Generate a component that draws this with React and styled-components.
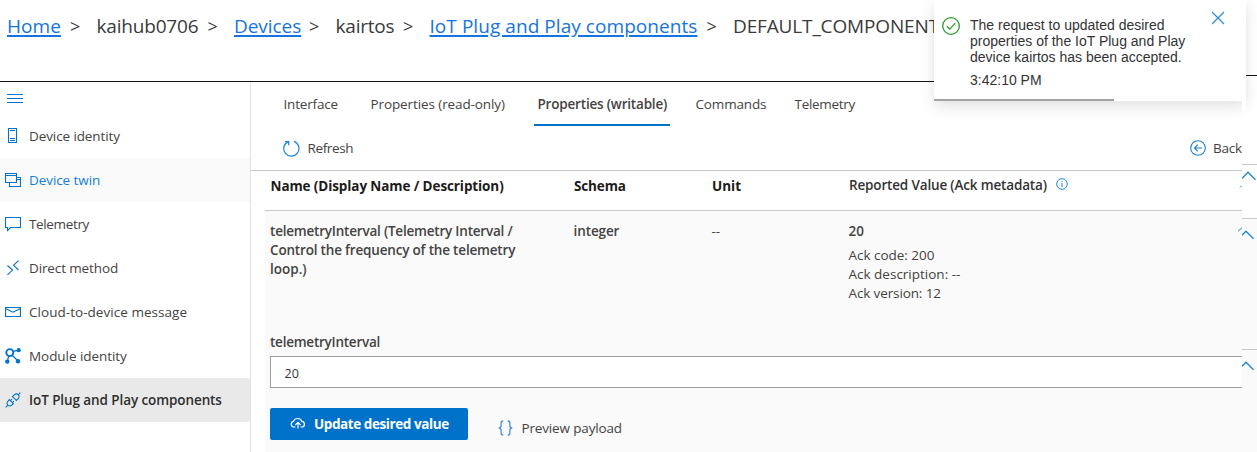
import React from "react";
import styled, { createGlobalStyle, css } from "styled-components";

const blue = "#0072c9";
const rule = "#c8c8c8";

const GlobalStyle = createGlobalStyle`
  *, *::before, *::after { box-sizing: border-box; }
  body {
    margin: 0;
    overflow: hidden;
    background: #fff;
    color: #444342;
    font: 13.5px/19px "Open Sans", "Noto Sans", sans-serif;
  }
`;

const Page = styled.div`
  position: relative;
  display: flex;
  flex-direction: column;
  width: 1257px;
  height: 452px;
  overflow: hidden;
`;

const Text = styled.span`
  white-space: nowrap;
  letter-spacing: ${(p) => p.$ls || 0}px;
`;

const Header = styled.header`
  display: flex;
  align-items: flex-start;
  height: 82px;
  flex: none;
`;
const Breadcrumbs = styled.nav`
  display: flex;
  flex: none;
  width: 1246px;
  height: 82px;
  padding: 9px 0 0 7px;
  border-bottom: 1px solid #111;
  font-size: 19px;
  line-height: 34px;
  color: #3a3a3a;
`;
const HeaderEdge = styled.div`
  flex: 1;
  height: 76px;
  border-bottom: 1px solid #111;
`;
const Crumb = styled.span`
  flex: none;
  width: ${(p) => p.$w}px;
  white-space: nowrap;
  letter-spacing: ${(p) => p.$ls || 0}px;
  ${(p) =>
    p.$link &&
    css`
      color: #1574e0;
      text-decoration: underline;
      text-decoration-thickness: 2px;
      text-underline-offset: 2px;
    `}
`;
const Separator = styled.span`
  flex: none;
  width: 35.5px;
  padding-left: 9px;
  font-size: 18px;
`;

const Body = styled.div`
  display: flex;
  flex: 1;
  min-height: 0;
`;

const Sidebar = styled.nav`
  flex: none;
  width: 251px;
  border-right: 1px solid #e1e1e1;
`;
const MenuToggle = styled.div`
  height: 32px;
  padding: 8px 0 0 7px;
  svg { display: block; }
`;
const NavItem = styled.div`
  display: flex;
  align-items: center;
  height: 44px;
  padding-left: 5px;
  gap: 8px;
  svg { flex: none; }
  ${(p) => p.$hover && css`background: #fafafa; color: #1380d6;`}
  ${(p) => p.$selected && css`background: #e9e9e9; color: #2f2e2d; font-weight: 600; border-radius: 0 2px 2px 0;`}
`;

const Main = styled.main`
  flex: 1;
  min-width: 0;
  overflow: hidden;
`;
const Tabs = styled.div`
  display: flex;
  height: 44px;
  padding-left: 29px;
`;
const Tab = styled.div`
  flex: none;
  width: ${(p) => p.$w}px;
  margin-right: ${(p) => p.$gap ?? 25}px;
  padding: 0 3.5px;
  line-height: 44px;
  border-bottom: 2px solid transparent;
  ${(p) => p.$active && css`border-color: ${blue}; font-weight: 600;`}
`;
const CommandBar = styled.div`
  display: flex;
  justify-content: space-between;
  height: 45px;
  padding: 0 0 0 32px;
  border-bottom: 1px solid ${rule};
`;
const Command = styled.div`
  display: flex;
  align-items: center;
  gap: 7.5px;
`;
const Panel = styled.div`
  margin-left: 14px;
`;
const columns = "303.500px 138px 137px 1fr";
const HeadRow = styled.div`
  display: grid;
  grid-template-columns: ${columns};
  height: 40px;
  padding: 6px 0 0 5.5px;
  border-bottom: 1px solid ${rule};
  color: #1c1b1a;
  font-weight: 700;
  overflow: hidden;
`;
const ReportedHead = styled.div`
  display: flex;
  justify-content: space-between;
  margin-top: -1px;
  font-weight: 600;
  color: #333;
`;
const WithInfo = styled.span`
  display: flex;
  align-items: flex-start;
  gap: 9.5px;
  svg { margin-top: 2px; }
`;
const Section = styled.div`
  height: 241px;
  background: #fafafa;
`;
const ValueRow = styled.div`
  display: grid;
  grid-template-columns: ${columns};
  height: 121px;
  padding: 11px 0 0 5px;
`;
const Stack = styled.div`
  display: flex;
  flex-direction: column;
  font-weight: ${(p) => (p.$strong ? 600 : 400)};
`;
const Reported = styled.div`
  display: flex;
  justify-content: space-between;
`;
const ReportedValue = styled.span`
  font-weight: 600;
  margin-bottom: 5px;
`;
const Remnant = styled.svg`
  display: block;
  flex: none;
  width: 4px;
  height: 5px;
  margin-top: ${(p) => p.$top}px;
`;
const Field = styled.label`
  display: block;
  padding-left: 5px;
`;
const FieldLabel = styled.div`
  height: 24px;
  padding: 1px 0 0 0;
  font-weight: 600;
`;
const Input = styled.div`
  height: 32px;
  padding: 0 13.5px;
  line-height: 33px;
  font-size: 12.500px;
  color: #333;
  background: #fff;
  border: 1px solid #a19f9d;
  border-right: 0;
`;
const Actions = styled.div`
  display: flex;
  gap: 29.500px;
  padding: 20px 0 0 5px;
`;
const PrimaryButton = styled.div`
  display: flex;
  align-items: center;
  gap: 8px;
  width: 198px;
  height: 32px;
  padding-left: 20px;
  border-radius: 2px;
  background: ${blue};
  color: #fff;
  font-weight: 700;
`;
const LinkButton = styled.div`
  display: flex;
  align-items: center;
  gap: 8px;
  height: 40px;
`;

const Strip = styled.aside`
  display: flex;
  flex-direction: column;
  flex: none;
  width: 15px;
`;
const StripCell = styled.div`
  flex: ${(p) => (p.$h ? "none" : 1)};
  height: ${(p) => p.$h}px;
  padding-top: ${(p) => p.$pad || 0}px;
  background: ${(p) => (p.$shade ? "#fafafa" : "#fff")};
  border-bottom: ${(p) => (p.$h ? `1px solid ${rule}` : 0)};
  svg { display: block; }
`;

const Toast = styled.div`
  position: absolute;
  left: 934px;
  top: 0;
  display: flex;
  width: 312px;
  height: 101px;
  padding: 17px 0 0 8px;
  background: #fff;
  color: #333;
  font: 14px/16px "Liberation Sans", Arial, sans-serif;
  box-shadow: 0 5px 14px rgba(0, 0, 0, 0.12);
  &::after {
    content: "";
    position: absolute;
    right: 0;
    top: 101px;
    width: 4px;
    height: 10px;
    background: #fff;
  }
`;
const ToastText = styled.div`
  width: 224px;
  margin-left: 10px;
`;
const ToastTime = styled.div`
  margin-top: 7px;
`;
const ToastClose = styled.svg`
  display: block;
  margin: -6px 0 0 16.500px;
`;
const ToastProgress = styled.div`
  position: absolute;
  left: 0;
  bottom: 0;
  width: 180px;
  height: 2px;
  background: #a3a3a3;
`;

const Icon = ({ w = 16, h = 16, sw = 1.1, color = blue, children }) => (
  <svg width={w} height={h} viewBox={`0 0 ${w} ${h}`} fill="none" stroke={color} strokeWidth={sw}>
    {children}
  </svg>
);

const DeviceIcon = () => (
  <Icon>
    <path d="M3.500.5h8v14h-8zM5 2.500h5M5 10.500h5M5 12.500h5" />
  </Icon>
);
const TwinIcon = () => (
  <Icon>
    <path d="M.5 1.5h11v9H.5zM.5 3.5h11M11.5 5.5h4v9h-11v-4M11.5 7.5h4" />
  </Icon>
);
const ChatIcon = () => (
  <Icon>
    <path d="M.5 1.5h15v10H5.5L2.5 14.5v-3h-2z" />
  </Icon>
);
const MethodIcon = () => (
  <Icon>
    <path d="M2.5 5.5l5 4.6-5 4.8M13.5.6l-5 4.7 5 4.7" />
  </Icon>
);
const MailIcon = () => (
  <Icon sw={1.2}>
    <path d="M.5 3.5h15v9H.5zM.5 4.5l7.5 3.7 7.5-3.7" />
  </Icon>
);
const ModuleIcon = () => (
  <Icon>
    <circle cx="4.8" cy="4.6" r="3.5" strokeWidth="1.9" />
    <path d="M8 3.4l5-1M7 7l6 6M3.8 8l-1.4 5" strokeWidth="1.2" />
    <g fill={blue} stroke="none">
      <circle cx="13.7" cy="2.2" r="2.1" />
      <circle cx="13" cy="13.2" r="2.2" />
      <circle cx="2.3" cy="13.6" r="2.2" />
    </g>
  </Icon>
);
const PlugIcon = () => (
  <Icon sw={1.05}>
    <g transform="translate(8 8) rotate(-45)">
      <path d="M-10.500 0h3M-2.300-3.400v6.800M-2.300-2.700h-2.300a2.700 2.700 0 0 0 0 5.400h2.300M-2.300-1.400h2.200M-2.300 1.400h2.200" />
      <path d="M10.500 0h-3M2-3.400v6.800M2-2.700h2.800a2.700 2.700 0 0 1 0 5.400H2" />
    </g>
  </Icon>
);
const RefreshIcon = () => (
  <Icon w={17} h={17} color="#1a86d9" sw={1.2}>
    <path d="M5.200 1.600A7.600 7.600 0 1 0 11 1.400M2 1.500h3.700v3.700" />
  </Icon>
);
const BackIcon = () => (
  <Icon color="#1a7fd0">
    <circle cx="8" cy="8" r="7.300" />
    <path d="M4.500 8h7.500M7.800 4.700L4.500 8l3.300 3.300" />
  </Icon>
);
const InfoIcon = () => (
  <Icon w={12} h={12} color="#1a86d9" sw={1}>
    <circle cx="6" cy="6" r="5.300" />
    <path d="M6 5v4M6 3v1" />
  </Icon>
);
const CloudIcon = () => (
  <Icon color="#fff" sw={1.200}>
    <path d="M5.500 11H3.700a2.900 2.900 0 0 1-.2-5.700C4.300 3.200 6 2.500 7.700 2.500c2 0 3.600 1.100 4 2.900a2.850 2.850 0 0 1 .6 5.600H10.500M8 12.500V6.500M5.300 9L8 6.300 10.700 9" />
  </Icon>
);
const BracesIcon = () => (
  <Icon color="#3a8ad0" sw={1.200}>
    <path d="M5.200.8C3.300.8 3.100 1.600 3.100 3v2.700C3.100 7.200 2.300 8 .7 8c1.600 0 2.400.8 2.400 2.300V13c0 1.400.2 2.200 2.100 2.200M9.800.8c1.900 0 2.100.8 2.100 2.200v2.700c0 1.500.8 2.300 2.400 2.300-1.600 0-2.400.8-2.400 2.300V13c0 1.400-.2 2.200-2.100 2.200" />
  </Icon>
);

const navItems = [
  { label: "Device identity", icon: DeviceIcon, ls: -0.1 },
  { label: "Device twin", icon: TwinIcon, ls: -0.08, hover: true },
  { label: "Telemetry", icon: ChatIcon, ls: -0.36 },
  { label: "Direct method", icon: MethodIcon, ls: -0.12 },
  { label: "Cloud-to-device message", icon: MailIcon, ls: 0.04 },
  { label: "Module identity", icon: ModuleIcon, ls: -0.06 },
  { label: "IoT Plug and Play components", icon: PlugIcon, ls: -0.09, selected: true },
];

export default function App() {
  return (
    <>
      <GlobalStyle />
      <Page>
        <Header>
          <Breadcrumbs>
            <Crumb $link $w={54} $ls={0.05}>Home</Crumb>
            <Separator>&gt;</Separator>
            <Crumb $w={102} $ls={-0.18}>kaihub0706</Crumb>
            <Separator>&gt;</Separator>
            <Crumb $link $w={66} $ls={-0.05}>Devices</Crumb>
            <Separator>&gt;</Separator>
            <Crumb $w={58.5} $ls={-0.2}>kairtos</Crumb>
            <Separator>&gt;</Separator>
            <Crumb $link $w={268} $ls={0.06}>IoT Plug and Play components</Crumb>
            <Separator>&gt;</Separator>
            <Crumb $w={204} $ls={-0.14}>DEFAULT_COMPONENT</Crumb>
          </Breadcrumbs>
          <HeaderEdge />
        </Header>
        <Body>
          <Sidebar>
            <MenuToggle>
              <Icon w={16} h={16}>
                <path d="M0 4.500h16M0 8.500h16M0 12.500h16" />
              </Icon>
            </MenuToggle>
            {navItems.map(({ label, icon: NavIcon, ls, hover, selected }) => (
              <NavItem key={label} $hover={hover} $selected={selected}>
                <NavIcon />
                <Text $ls={ls}>{label}</Text>
              </NavItem>
            ))}
          </Sidebar>
          <Main>
            <Tabs>
              <Tab $w={62}><Text $ls={-0.17}>Interface</Text></Tab>
              <Tab $w={142}><Text $ls={-0.1}>Properties (read-only)</Text></Tab>
              <Tab $w={136} $gap={22} $active><Text $ls={-0.19}>Properties (writable)</Text></Tab>
              <Tab $w={78} $gap={21}><Text $ls={-0.15}>Commands</Text></Tab>
              <Tab $w={68}><Text $ls={-0.3}>Telemetry</Text></Tab>
            </Tabs>
            <CommandBar>
              <Command>
                <RefreshIcon />
                <Text $ls={-0.36}>Refresh</Text>
              </Command>
              <Command>
                <BackIcon />
                <Text $ls={-0.2}>Back</Text>
              </Command>
            </CommandBar>
            <Panel>
              <HeadRow>
                <Text $ls={-0.1}>Name (Display Name / Description)</Text>
                <Text $ls={-0.15}>Schema</Text>
                <Text>Unit</Text>
                <ReportedHead>
                  <WithInfo>
                    <Text $ls={-0.16}>Reported Value (Ack metadata)</Text>
                    <InfoIcon />
                  </WithInfo>
                  <Remnant $top={8} viewBox="0 0 4 5">
                    <path d="M2 3.500L4 1.500" stroke="#1a86d9" />
                  </Remnant>
                </ReportedHead>
              </HeadRow>
              <Section>
                <ValueRow>
                  <Stack $strong>
                    <Text $ls={-0.21}>telemetryInterval (Telemetry Interval /</Text>
                    <Text $ls={-0.18}>Control the frequency of the telemetry</Text>
                    <Text>loop.)</Text>
                  </Stack>
                  <Stack $strong><Text $ls={-0.1}>integer</Text></Stack>
                  <Stack><Text>--</Text></Stack>
                  <Reported>
                    <Stack>
                      <ReportedValue>20</ReportedValue>
                      <Text $ls={-0.03}>Ack code: 200</Text>
                      <Text>Ack description: --</Text>
                      <Text $ls={-0.12}>Ack version: 12</Text>
                    </Stack>
                    <Remnant $top={5} viewBox="0 0 4 5">
                      <path d="M0 4.300L4 .8" stroke="#1a86d9" />
                    </Remnant>
                  </Reported>
                </ValueRow>
                <Field>
                  <FieldLabel><Text $ls={-0.24}>telemetryInterval</Text></FieldLabel>
                  <Input>20</Input>
                </Field>
                <Actions>
                  <PrimaryButton>
                    <CloudIcon />
                    <Text $ls={-0.42}>Update desired value</Text>
                  </PrimaryButton>
                  <LinkButton>
                    <BracesIcon />
                    <Text $ls={-0.15}>Preview payload</Text>
                  </LinkButton>
                </Actions>
              </Section>
            </Panel>
          </Main>
          <Strip>
            <StripCell $h={83} />
            <StripCell $h={54} $pad={6}>
              <Icon w={15} h={12} color="#1a86d9" sw={1.300}>
                <path d="M0 7.500L6 1.200l7.500 7.500" />
              </Icon>
            </StripCell>
            <StripCell $h={131} $pad={11} $shade>
              <Icon w={15} h={12} color="#1a86d9" sw={1.300}>
                <path d="M0 5.200L4 1.200l7.500 7.500" />
              </Icon>
            </StripCell>
            <StripCell $pad={11} $shade>
              <Icon w={15} h={12} color="#1a86d9" sw={1.300}>
                <path d="M0 5.200L4 1.200l7.500 7.500" />
              </Icon>
            </StripCell>
          </Strip>
        </Body>
        <Toast>
          <Icon w={18} h={18} color="#2a9a2a" sw={1.300}>
            <circle cx="9" cy="9" r="8.300" />
            <path d="M4.800 9.200l3 2.900 5.500-6" />
          </Icon>
          <ToastText>
            The request to updated desired properties of the IoT Plug and Play device kairtos has been accepted.
            <ToastTime>3:42:10 PM</ToastTime>
          </ToastText>
          <ToastClose width="14" height="14" viewBox="0 0 14 14" fill="none" stroke="#2b8ad8" strokeWidth="1.200">
            <path d="M1 1l12 12M13 1L1 13" />
          </ToastClose>
          <ToastProgress />
        </Toast>
      </Page>
    </>
  );
}
